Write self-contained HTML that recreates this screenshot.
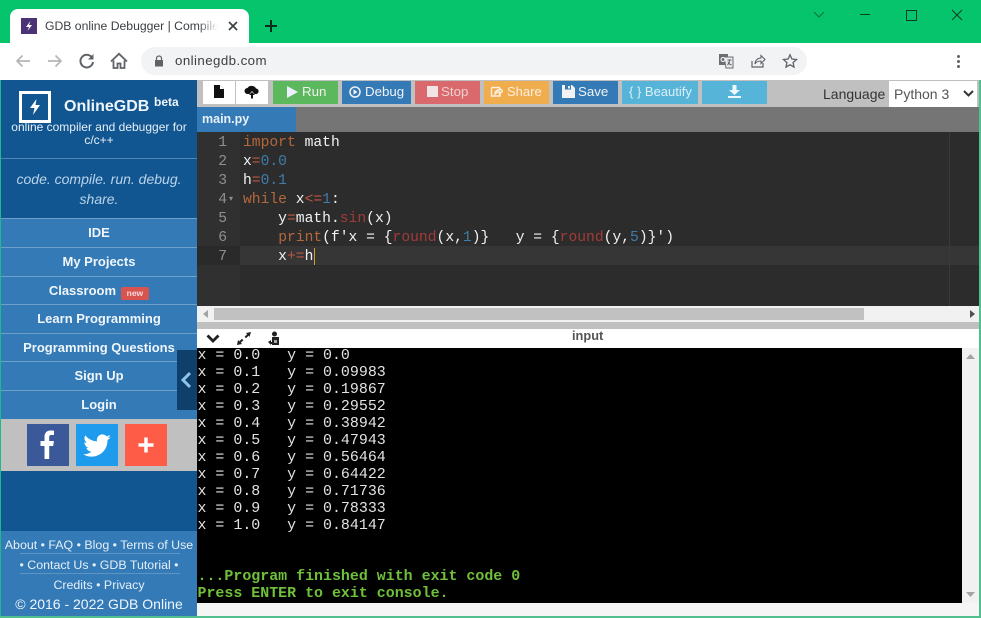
<!DOCTYPE html>
<html><head><meta charset="utf-8">
<style>
html,body{margin:0;padding:0}
body{width:981px;height:618px;overflow:hidden;position:relative;background:#f5f5f5;font-family:"Liberation Sans",sans-serif}
.a{position:absolute}
.t{position:absolute;white-space:pre}
.nav{position:absolute;left:1px;width:196px;height:28px;background:#337ab7;border-top:1px solid #6d9fc9;color:#f0f6fb;font:bold 13px/27px "Liberation Sans",sans-serif;text-align:center;box-sizing:content-box}
.btn{position:absolute;top:81px;height:23px;color:#f2f2f2;font:13.3px/21px "Liberation Sans",sans-serif;white-space:pre}
.btn span{position:absolute;top:0}
.ed{position:absolute;left:243px;font:14.67px/19px "Liberation Mono",monospace;color:#f2f2f2;white-space:pre}
.ln{position:absolute;left:197px;width:30px;text-align:right;font:14.67px/19px "Liberation Mono",monospace;color:#8f908a}
.k{color:#b5683a}.n{color:#3f7ca8}.o{color:#c0563f}.f{color:#a33a3a}.s{color:#d8d8c8}
.con{position:absolute;left:197.500px;white-space:pre}
.foot{position:absolute;left:1px;width:196px;text-align:center;color:#e6eff7;font:12.400px/20px "Liberation Sans",sans-serif;white-space:pre}
</style></head><body>

<!-- chrome -->
<div class="a" style="left:0;top:0;width:981px;height:43px;background:#06c46b"></div>
<div class="a" style="left:0;top:43px;width:981px;height:37px;background:#fff"></div>
<div class="a" style="left:10px;top:9px;width:239px;height:34px;background:#fff;border-radius:8px 8px 0 0"></div>
<div class="a" style="left:21px;top:18px;width:16px;height:16px;background:#4b3476"></div>
<svg class="a" style="left:21px;top:18px" width="16" height="16"><path d="M9.500 3 5 9h3l-1.500 4L11 7H8z" fill="#fff"/></svg>
<div class="t" style="left:45px;top:17px;width:173px;overflow:hidden;font:12.200px/18px 'Liberation Sans',sans-serif;color:#3c4043">GDB online Debugger | Compiler</div>
<div class="a" style="left:198px;top:17px;width:20px;height:18px;background:linear-gradient(90deg,rgba(255,255,255,0),#fff)"></div>
<svg class="a" style="left:227px;top:20px" width="12" height="12"><path d="M2 2l8 8M10 2l-8 8" stroke="#3c4043" stroke-width="1.700"/></svg>
<svg class="a" style="left:264px;top:19px" width="14" height="14"><path d="M7 1v12M1 7h12" stroke="#0b2e1c" stroke-width="2"/></svg>
<svg class="a" style="left:813px;top:10px" width="12" height="10"><path d="M1 2l5 5 5-5" stroke="#0a6e3f" fill="none" stroke-width="1"/></svg>
<div class="a" style="left:860px;top:14px;width:10px;height:1px;background:#0a3d24"></div>
<div class="a" style="left:906px;top:10px;width:9px;height:9px;border:1px solid #0a3d24"></div>
<svg class="a" style="left:951px;top:9px" width="12" height="12"><path d="M1 1l10 10M11 1L1 11" stroke="#0a3d24" stroke-width="1"/></svg>

<svg class="a" style="left:14px;top:52px" width="18" height="18"><path d="M16 9H3M8.500 3.500 3 9l5.500 5.500" stroke="#b3b5b8" stroke-width="1.700" fill="none"/></svg>
<svg class="a" style="left:46px;top:52px" width="18" height="18"><path d="M2 9h13M9.500 3.500 15 9l-5.500 5.500" stroke="#b3b5b8" stroke-width="1.700" fill="none"/></svg>
<svg class="a" style="left:78px;top:52px" width="18" height="18"><path d="M14.500 6.500A6.300 6.300 0 1 0 15 10" stroke="#5f6368" stroke-width="2" fill="none"/><path d="M15.500 2v5.500H10z" fill="#5f6368"/></svg>
<svg class="a" style="left:110px;top:52px" width="18" height="18"><path d="M1 9.500 9 1.800l8 7.700M3.500 8.500V16h4v-4.500h3V16h4V8.500" stroke="#5f6368" stroke-width="1.800" fill="none"/></svg>
<div class="a" style="left:141px;top:47px;width:666px;height:28px;background:#f1f3f4;border-radius:14px"></div>
<svg class="a" style="left:153px;top:54px" width="12" height="14"><path d="M3.500 6V4.500a2.500 2.500 0 0 1 5 0V6" stroke="#5f6368" stroke-width="1.200" fill="none"/><rect x="2" y="6" width="8" height="6.500" fill="#5f6368"/></svg>
<div class="t" style="left:175px;top:52px;font:13.300px/18px 'Liberation Sans',sans-serif;color:#3c4043;letter-spacing:.42px">onlinegdb.com</div>
<svg class="a" style="left:718px;top:53px" width="16" height="16"><rect x="1" y="1" width="9" height="11" fill="#6b6f73"/><path d="M6 4h9v11H8z" fill="#e8eaec" stroke="#6b6f73"/><circle cx="5" cy="6.500" r="2" fill="none" stroke="#fff"/><path d="M9.500 7h4M11.500 7c0 3-1 4-2 5M10 9c1 2 2 2.500 3.500 3" stroke="#5f6368" fill="none"/></svg>
<svg class="a" style="left:750px;top:53px" width="16" height="16"><path d="M2 8v6h11v-4" stroke="#5f6368" stroke-width="1.200" fill="none"/><path d="M5 11c0-4 3-6 6-6V2.500L15 6.500l-4 4V8c-3 0-5 1-6 3z" stroke="#5f6368" stroke-width="1.100" fill="none"/></svg>
<svg class="a" style="left:782px;top:53px" width="16" height="16"><path d="M8 1.800l1.900 4.200 4.600.5-3.400 3.100.9 4.500L8 11.800l-4 2.300.9-4.500L1.500 6.500l4.600-.5z" stroke="#5f6368" stroke-width="1.300" fill="none"/></svg>
<div class="a" style="left:957px;top:55px;width:3px;height:3px;background:#5f6368;border-radius:50%;box-shadow:0 5px 0 #5f6368,0 10px 0 #5f6368"></div>

<!-- green frame -->
<div class="a" style="left:0;top:80px;width:1px;height:538px;background:#1fb98d"></div>
<div class="a" style="left:979px;top:80px;width:2px;height:538px;background:#52c08e"></div>
<div class="a" style="left:0;top:616px;width:981px;height:2px;background:#52c08e"></div>

<!-- sidebar -->
<div class="a" style="left:1px;top:80px;width:196px;height:536px;background:#125691"></div>
<div class="a" style="left:1px;top:158px;width:196px;height:1px;background:#4f86b5"></div>
<svg class="a" style="left:19px;top:91px" width="33" height="33"><rect x="1.500" y="1.500" width="29" height="29" fill="none" stroke="#fff" stroke-width="3"/><path d="M17.500 8 11 17h4.500L14 24l7-10h-4.500z" fill="#fff"/></svg>
<div class="t" style="left:64px;top:97px;font:bold 16px/20px 'Liberation Sans',sans-serif;color:#eef5fb">OnlineGDB</div>
<div class="t" style="left:154px;top:95px;font:bold 12px/14px 'Liberation Sans',sans-serif;color:#eef5fb">beta</div>
<div class="a" style="left:1px;top:121px;width:196px;text-align:center;font:12px/13px 'Liberation Sans',sans-serif;color:#e6eff7">online compiler and debugger for<br>c/c++</div>
<div class="a" style="left:1px;top:169px;width:196px;text-align:center;font:italic 14px/20px 'Liberation Sans',sans-serif;color:#b9d3ea">code. compile. run. debug.<br>share.</div>

<div class="nav" style="top:218px">IDE</div>
<div class="nav" style="top:247px">My Projects</div>
<div class="nav" style="top:276px">Classroom <span style="display:inline-block;background:#d9534f;color:#f5dcdc;font:bold 8.500px/13px 'Liberation Sans',sans-serif;padding:0 6px;border-radius:2px;vertical-align:-1px;margin-left:1px">new</span></div>
<div class="nav" style="top:304px">Learn Programming</div>
<div class="nav" style="top:333px">Programming Questions</div>
<div class="nav" style="top:361px">Sign Up</div>
<div class="nav" style="top:390px;height:29px">Login</div>

<div class="a" style="left:1px;top:419px;width:196px;height:52px;background:#c0c0c0"></div>
<div class="a" style="left:27px;top:424px;width:42px;height:42px;background:#3b5998"></div>
<svg class="a" style="left:27px;top:424px" width="42" height="42"><path d="M18 36V23h-4v-5h4v-4c0-4.500 2.500-6.500 6-6.500 1.700 0 3 .1 3.500.2V12h-2.500c-2 0-2.300 1-2.300 2.400V18h4.700l-.7 5h-4v13z" fill="#fff" transform="translate(-.5 -1)"/></svg>
<div class="a" style="left:76px;top:424px;width:42px;height:42px;background:#1e9bec"></div>
<svg class="a" style="left:76px;top:424px" width="42" height="42" viewBox="0 0 24 24"><path d="M20 7.500c-.6.300-1.200.4-1.900.5.700-.4 1.200-1 1.400-1.800-.6.400-1.300.7-2 .8a3.200 3.200 0 0 0-5.500 2.900C9.300 9.800 6.900 8.500 5.300 6.500c-.9 1.500-.4 3.400 1 4.300-.5 0-1-.2-1.500-.4 0 1.600 1.100 2.900 2.600 3.200-.5.100-1 .100-1.500 0 .4 1.300 1.600 2.200 3 2.200A6.500 6.500 0 0 1 4 17.200a9.100 9.100 0 0 0 14-8.100c.8-.4 1.500-1 2-1.600z" fill="#fff"/></svg>
<div class="a" style="left:125px;top:424px;width:42px;height:42px;background:#ff5c47"></div>
<svg class="a" style="left:125px;top:424px" width="42" height="42"><path d="M21 13.500v15M13.500 21h15" stroke="#fff" stroke-width="3.500"/></svg>

<div class="a" style="left:1px;top:531px;width:196px;height:85px;background:#337ab7"></div>
<div class="foot" style="top:535px">About • FAQ • Blog • Terms of Use</div>
<div class="foot" style="top:555px">• Contact Us • GDB Tutorial •</div>
<div class="foot" style="top:575px">Credits • Privacy</div>
<div class="foot" style="top:594px;font-size:14px;color:#f0f6fb">© 2016 - 2022 GDB Online</div>
<div class="a" style="left:20px;top:553px;width:160px;height:1px;background:#5c94c4"></div>
<div class="a" style="left:20px;top:573px;width:160px;height:1px;background:#5c94c4"></div>

<!-- toolbar -->
<div class="a" style="left:197px;top:80px;width:782px;height:27px;background:#c0c0c0"></div>
<div class="a" style="left:203px;top:81px;width:32px;height:23px;background:#fff"></div>
<div class="a" style="left:236px;top:81px;width:32px;height:23px;background:#fff"></div>
<svg class="a" style="left:213px;top:85px" width="12" height="14"><path d="M1 0h6l4 4v9H1z" fill="#111"/><path d="M7 0v4h4" fill="#fff"/></svg>
<svg class="a" style="left:244px;top:85px" width="16" height="14"><path d="M3.500 9a3 3 0 0 1 0-6A4.500 3.500 0 0 1 12 3.500a2.800 2.800 0 0 1 .5 5.500H10.500L8 6 5.500 9z" fill="#111"/><path d="M8 7l3 3H9v3.500H7V10H5z" fill="#111"/></svg>

<div class="btn" style="left:273px;width:65px;background:#5cb85c"><svg class="a" style="left:14px;top:5px" width="12" height="12"><path d="M0 0l11 6-11 6z" fill="#eef"/></svg><span style="left:29px">Run</span></div>
<div class="btn" style="left:342px;width:69px;background:#337ab7"><svg class="a" style="left:7px;top:5px" width="12" height="12"><circle cx="6" cy="6" r="5" fill="none" stroke="#f2f2f2" stroke-width="1.500"/><path d="M4.500 3.300 8.500 6l-4 2.700z" fill="#f2f2f2"/></svg><span style="left:23px">Debug</span></div>
<div class="btn" style="left:415px;width:65px;background:#d9696c;color:#f0d0d0"><div class="a" style="left:12px;top:5px;width:11px;height:11px;background:#f0e4e4"></div><span style="left:26px">Stop</span></div>
<div class="btn" style="left:484px;width:65px;background:#f0ad4e;color:#fbeede"><svg class="a" style="left:6px;top:5px" width="13" height="12"><path d="M9 1.500H2.500a1 1 0 0 0-1 1v7.500h8.500V8M5 8c0-3 2-4 4.500-4V2L12.500 5 9.500 8V6C7.500 6 6 6.500 5 8z" stroke="#fbeede" stroke-width="1.400" fill="none"/></svg><span style="left:23px;font-size:13px">Share</span></div>
<div class="btn" style="left:553px;width:65px;background:#337ab7"><svg class="a" style="left:9px;top:4px" width="13" height="13"><path d="M0 0h10l3 3v10H0z" fill="#f2f2f2"/><rect x="3" y="0" width="6" height="4.500" fill="#337ab7"/><rect x="6" y="1" width="2" height="2.500" fill="#f2f2f2"/></svg><span style="left:25px">Save</span></div>
<div class="btn" style="left:622px;width:76px;background:#56b4d9;color:#dceff7"><span style="left:7px;font-size:13px">{ } Beautify</span></div>
<div class="btn" style="left:702px;width:65px;background:#56b4d9"><svg class="a" style="left:26px;top:4px" width="13" height="14"><path d="M4.500 0h4v5h3.500L6.500 10 1 5h3.500z" fill="#eef7fb"/><rect x="0" y="11" width="13" height="2" fill="#eef7fb"/></svg></div>
<div class="t" style="left:823px;top:85px;font:14px/18px 'Liberation Sans',sans-serif;color:#333">Language</div>
<div class="a" style="left:889px;top:81px;width:88px;height:26px;background:#fff"></div>
<div class="t" style="left:894px;top:85px;font:14px/18px 'Liberation Sans',sans-serif;color:#555">Python 3</div>
<svg class="a" style="left:963px;top:90px" width="11" height="8"><path d="M1 1l4.500 4.500L10 1" stroke="#333" stroke-width="2" fill="none"/></svg>

<!-- tabs -->
<div class="a" style="left:197px;top:107px;width:782px;height:25px;background:#757575"></div>
<div class="a" style="left:197px;top:107px;width:99px;height:25px;background:#337ab7"></div>
<div class="t" style="left:202px;top:110px;font:bold 12.500px/18px 'Liberation Sans',sans-serif;color:#e8f1f8">main.py</div>

<!-- editor -->
<div class="a" style="left:197px;top:132px;width:782px;height:174px;background:#2c2c2c"></div>
<div class="a" style="left:197px;top:132px;width:43px;height:174px;background:#303030"></div>
<div class="a" style="left:197px;top:246px;width:43px;height:19px;background:#2a2a2a"></div>
<div class="a" style="left:240px;top:246px;width:739px;height:19px;background:#363636"></div>
<div class="a" style="left:949px;top:132px;width:1px;height:174px;background:#3a3a3a"></div>
<div class="ln" style="top:134px">1</div>
<div class="ln" style="top:153px">2</div>
<div class="ln" style="top:172px">3</div>
<div class="ln" style="top:191px">4</div>
<div class="ln" style="top:210px">5</div>
<div class="ln" style="top:229px">6</div>
<div class="ln" style="top:248px">7</div>
<div class="t" style="left:229px;top:194px;font:8px/10px 'Liberation Sans',sans-serif;color:#8f908a">▾</div>
<div class="ed" style="top:134px"><span class="k">import</span> math</div>
<div class="ed" style="top:153px">x<span class="o">=</span><span class="n">0.0</span></div>
<div class="ed" style="top:172px">h<span class="o">=</span><span class="n">0.1</span></div>
<div class="ed" style="top:191px"><span class="k">while</span> x<span class="o">&lt;=</span><span class="n">1</span>:</div>
<div class="ed" style="top:210px">    y<span class="o">=</span>math.<span class="f">sin</span>(x)</div>
<div class="ed" style="top:229px">    <span class="k">print</span>(f'x = {<span class="f">round</span>(x,<span class="n">1</span>)}   y = {<span class="f">round</span>(y,<span class="n">5</span>)}')</div>
<div class="ed" style="top:248px">    x<span class="o">+=</span>h</div>
<div class="a" style="left:314px;top:248px;width:1px;height:17px;background:#c9a23c"></div>

<!-- editor scrollbar -->
<div class="a" style="left:197px;top:306px;width:782px;height:16px;background:#f1f1f1"></div>
<div class="a" style="left:214px;top:308px;width:650px;height:12px;background:#c1c1c1"></div>
<svg class="a" style="left:202px;top:309px" width="8" height="10"><path d="M6 1v8L1 5z" fill="#a3a3a3"/></svg>
<svg class="a" style="left:968px;top:309px" width="8" height="10"><path d="M2 1v8l5-4z" fill="#505050"/></svg>
<div class="a" style="left:197px;top:322px;width:782px;height:7px;background:#c0c0c0"></div>

<!-- console header -->
<div class="a" style="left:197px;top:329px;width:782px;height:19px;background:#fff"></div>
<svg class="a" style="left:206px;top:333px" width="14" height="11"><path d="M1.500 2.500 7 8l5.500-5.500" stroke="#222" stroke-width="2.800" fill="none"/></svg>
<svg class="a" style="left:236px;top:331px" width="16" height="15"><path d="M1 14l5-1-1.200-1.200 2.600-2.500-1.500-1.500-2.500 2.600L2 9zM15 1l-5 1 1.200 1.200-2.600 2.500 1.500 1.500 2.500-2.600L13.500 6z" fill="#222"/></svg>
<svg class="a" style="left:267px;top:331px" width="14" height="15"><circle cx="7.500" cy="3" r="2.500" fill="#222"/><path d="M5 6h7v8H5z" fill="#222"/><path d="M1 11l3-2v2h2v2H4v1z" fill="#222"/><rect x="7" y="9" width="3" height="3" fill="#aaa"/></svg>
<div class="t" style="left:572px;top:328px;font:bold 12.800px/16px 'Liberation Sans',sans-serif;color:#555">input</div>

<!-- console -->
<div class="a" style="left:197px;top:348px;width:765px;height:255px;background:#000"></div>
<div class="a" style="left:962px;top:348px;width:17px;height:255px;background:#f1f1f1"></div>
<svg class="a" style="left:965px;top:353px" width="11" height="7"><path d="M5.500 1 10 6H1z" fill="#a3a3a3"/></svg>
<svg class="a" style="left:965px;top:591px" width="11" height="7"><path d="M1 1h9L5.500 6z" fill="#a3a3a3"/></svg>
<div class="a" style="left:197px;top:603px;width:782px;height:13px;background:#f5f5f5"></div>

<div class="con" style="top:348px;font:14.950px/17px 'Liberation Mono',monospace;color:#e2e2e2">x = 0.0   y = 0.0
x = 0.1   y = 0.09983
x = 0.2   y = 0.19867
x = 0.3   y = 0.29552
x = 0.4   y = 0.38942
x = 0.5   y = 0.47943
x = 0.6   y = 0.56464
x = 0.7   y = 0.64422
x = 0.8   y = 0.71736
x = 0.9   y = 0.78333
x = 1.0   y = 0.84147</div>
<div class="con" style="top:569px;font:14.950px/17px 'Liberation Mono',monospace;font-weight:bold;color:#6fc03a">...Program finished with exit code 0
Press ENTER to exit console.</div>

<!-- collapse -->
<div class="a" style="left:177px;top:350px;width:20px;height:60px;background:#0f3f6b"></div>
<svg class="a" style="left:179px;top:371px" width="14" height="18"><path d="M11 2 4 9l7 7" stroke="#8cc4ee" stroke-width="3" fill="none"/></svg>

</body></html>
